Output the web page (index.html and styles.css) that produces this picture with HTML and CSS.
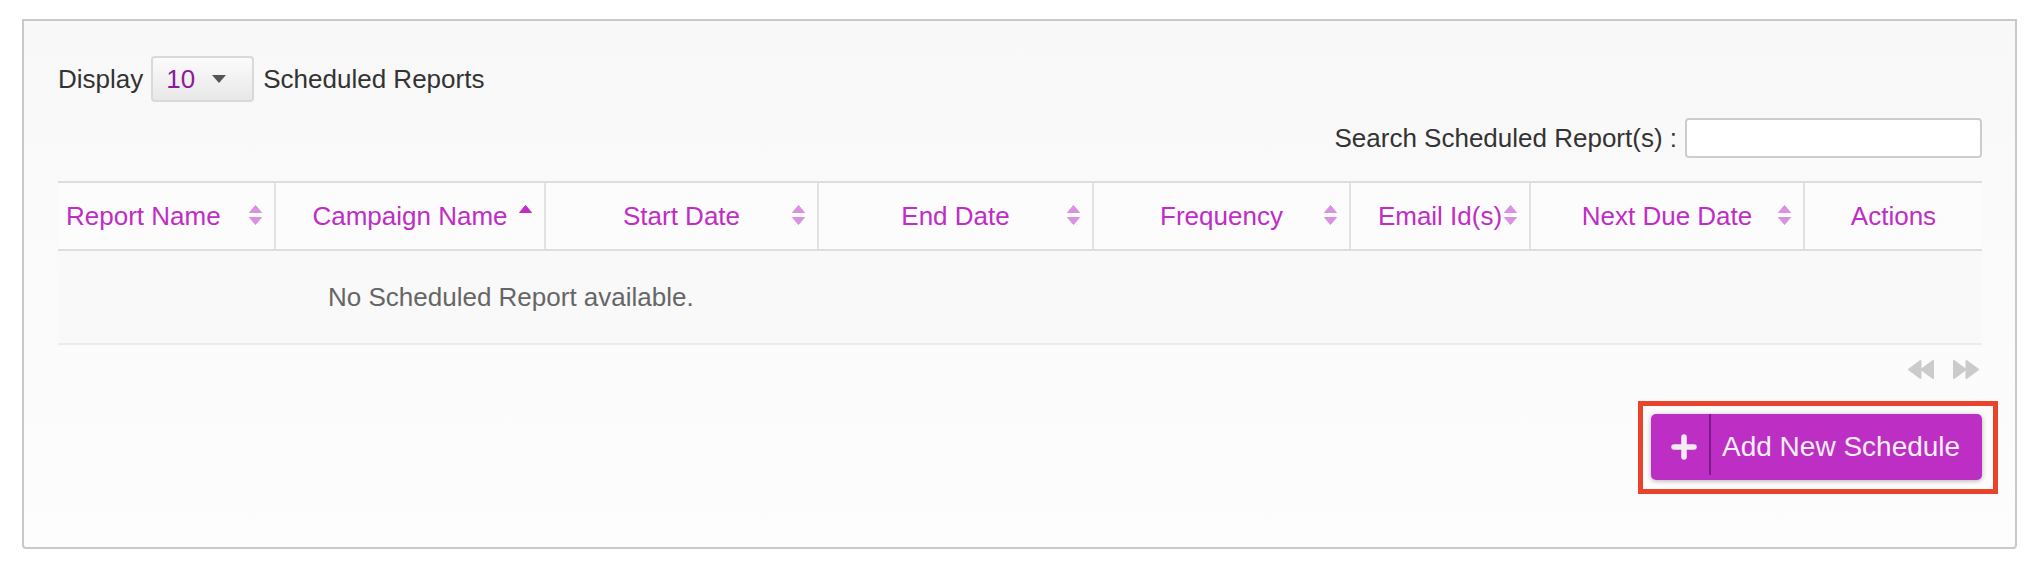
FILE: index.html
```html
<!DOCTYPE html>
<html lang="en">
<head>
<meta charset="utf-8">
<title>Scheduled Reports</title>
<link rel="stylesheet" href="styles.css">
</head>
<body>
<div class="page">
  <div class="panel">
    <div class="length-row">
      <span>Display</span>
      <div class="select">
        <span class="sel-val">10</span>
        <svg class="caret" width="14" height="8" viewBox="0 0 14 8"><path d="M0 0 H14 L7 8 Z" fill="#555"/></svg>
      </div>
      <span>Scheduled Reports</span>
    </div>

    <div class="search-row">
      <label class="search-label" for="q">Search Scheduled Report(s) :</label>
      <input id="q" class="search-input" type="text">
    </div>

    <table class="reports">
      <colgroup>
        <col class="c1"><col class="c2"><col class="c3"><col class="c4">
        <col class="c5"><col class="c6"><col class="c7"><col class="c8">
      </colgroup>
      <thead>
        <tr>
          <th class="first">Report Name<span class="sort"><svg width="13" height="20" viewBox="0 0 13 20"><path d="M6.5 0.5 L12.5 7.5 H0.5 Z" fill="#d992e1" stroke="#d992e1" stroke-linejoin="round"/><path d="M0.5 12.5 H12.5 L6.5 19.5 Z" fill="#d992e1" stroke="#d992e1" stroke-linejoin="round"/></svg></span></th>
          <th>Campaign Name<span class="sort"><svg width="13" height="20" viewBox="0 0 13 20"><path d="M6.5 0.5 L12.5 7.5 H0.5 Z" fill="#bf2dc5" stroke="#bf2dc5" stroke-linejoin="round"/></svg></span></th>
          <th>Start Date<span class="sort"><svg width="13" height="20" viewBox="0 0 13 20"><path d="M6.5 0.5 L12.5 7.5 H0.5 Z" fill="#d992e1" stroke="#d992e1" stroke-linejoin="round"/><path d="M0.5 12.5 H12.5 L6.5 19.5 Z" fill="#d992e1" stroke="#d992e1" stroke-linejoin="round"/></svg></span></th>
          <th>End Date<span class="sort"><svg width="13" height="20" viewBox="0 0 13 20"><path d="M6.5 0.5 L12.5 7.5 H0.5 Z" fill="#d992e1" stroke="#d992e1" stroke-linejoin="round"/><path d="M0.5 12.5 H12.5 L6.5 19.5 Z" fill="#d992e1" stroke="#d992e1" stroke-linejoin="round"/></svg></span></th>
          <th>Frequency<span class="sort"><svg width="13" height="20" viewBox="0 0 13 20"><path d="M6.5 0.5 L12.5 7.5 H0.5 Z" fill="#d992e1" stroke="#d992e1" stroke-linejoin="round"/><path d="M0.5 12.5 H12.5 L6.5 19.5 Z" fill="#d992e1" stroke="#d992e1" stroke-linejoin="round"/></svg></span></th>
          <th>Email Id(s)<span class="sort"><svg width="13" height="20" viewBox="0 0 13 20"><path d="M6.5 0.5 L12.5 7.5 H0.5 Z" fill="#d992e1" stroke="#d992e1" stroke-linejoin="round"/><path d="M0.5 12.5 H12.5 L6.5 19.5 Z" fill="#d992e1" stroke="#d992e1" stroke-linejoin="round"/></svg></span></th>
          <th>Next Due Date<span class="sort"><svg width="13" height="20" viewBox="0 0 13 20"><path d="M6.5 0.5 L12.5 7.5 H0.5 Z" fill="#d992e1" stroke="#d992e1" stroke-linejoin="round"/><path d="M0.5 12.5 H12.5 L6.5 19.5 Z" fill="#d992e1" stroke="#d992e1" stroke-linejoin="round"/></svg></span></th>
          <th>Actions</th>
        </tr>
      </thead>
      <tbody>
        <tr>
          <td class="empty" colspan="8">No Scheduled Report available.</td>
        </tr>
      </tbody>
    </table>

    <div class="pager">
      <span class="pg-btn" title="Previous"><svg width="26" height="19" viewBox="0 0 26 19"><path d="M12.5 1 L1 9.5 L12.5 18 Z" fill="#cbcbcb" stroke="#cbcbcb" stroke-width="2" stroke-linejoin="round"/><path d="M25 1 L13.5 9.5 L25 18 Z" fill="#cbcbcb" stroke="#cbcbcb" stroke-width="2" stroke-linejoin="round"/></svg></span>
      <span class="pg-btn" title="Next"><svg width="26" height="19" viewBox="0 0 26 19"><path d="M1 1 L12.5 9.5 L1 18 Z" fill="#cbcbcb" stroke="#cbcbcb" stroke-width="2" stroke-linejoin="round"/><path d="M13.5 1 L25 9.5 L13.5 18 Z" fill="#cbcbcb" stroke="#cbcbcb" stroke-width="2" stroke-linejoin="round"/></svg></span>
    </div>

    <div class="actions">
      <div class="highlight">
        <button class="add-btn" type="button">
          <span class="btn-icon"><svg width="26" height="26" viewBox="0 0 26 26"><path d="M13 3 V23 M3 13 H23" stroke="#f4ecf5" stroke-width="5.5" stroke-linecap="round"/></svg></span>
          <span class="btn-label">Add New Schedule</span>
        </button>
      </div>
    </div>
  </div>
</div>
</body>
</html>
```
FILE: styles.css
```css
* { box-sizing: border-box; }

html, body {
  margin: 0;
  background: #ffffff;
}

body {
  font-family: "Liberation Sans", Arial, Helvetica, sans-serif;
  font-size: 26px;
  color: #333333;
}

.page {
  padding: 19px 0 0 22px;
}

.panel {
  width: 1995px;
  border: 2px solid #c9c9c9;
  border-radius: 0 0 4px 4px;
  background: linear-gradient(#f8f8f8, #fdfdfd);
  padding: 35px 33px 53px 34px;
}

/* Length selector row */
.length-row {
  display: flex;
  align-items: center;
  gap: 8px;
  height: 46px;
}

.select {
  width: 103px;
  height: 46px;
  display: flex;
  align-items: center;
  justify-content: space-between;
  padding: 0 26px 0 13px;
  border: 2px solid #d9d9d9;
  border-radius: 4px;
  background: linear-gradient(#fbfbfb, #e8e8e8);
  margin-right: 1px;
}

.sel-val {
  color: #8c1b9c;
}

.caret {
  display: block;
}

/* Search row */
.search-row {
  display: flex;
  justify-content: flex-end;
  align-items: center;
  gap: 8px;
  margin-top: 16px;
}

.search-label {
  color: #333333;
}

.search-input {
  width: 297px;
  height: 40px;
  border: 2px solid #cccccc;
  border-radius: 4px;
  background: #ffffff;
  font: inherit;
  padding: 0 8px;
}

/* Table */
.reports {
  width: 1924px;
  margin-top: 23px;
  border-collapse: collapse;
  table-layout: fixed;
}

.c1 { width: 217px; }
.c2 { width: 270px; }
.c3 { width: 273px; }
.c4 { width: 275px; }
.c5 { width: 257px; }
.c6 { width: 180px; }
.c7 { width: 274px; }
.c8 { width: 178px; }

.reports th {
  position: relative;
  height: 68px;
  padding: 0 8px;
  border-top: 2px solid #dddddd;
  border-bottom: 2px solid #dddddd;
  background: #fcfcfc;
  color: #bf2dc5;
  font-weight: normal;
  text-align: center;
  white-space: nowrap;
}

.reports th + th {
  border-left: 2px solid #e2e2e2;
}

.reports th.first {
  text-align: left;
}

.sort {
  position: absolute;
  right: 12px;
  top: 50%;
  width: 13px;
  height: 20px;
  margin-top: -11px;
}

.sort svg {
  display: block;
}

.reports td.empty {
  height: 94px;
  padding: 0 0 0 270px;
  background: #f9f9f9;
  border-bottom: 2px solid #ececec;
  color: #666666;
  text-align: left;
}

/* Pager */
.pager {
  display: flex;
  justify-content: flex-end;
  gap: 19px;
  height: 19px;
  margin-top: 15px;
  padding-right: 3px;
}

.pg-btn svg {
  display: block;
}

/* Add button */
.actions {
  display: flex;
  justify-content: flex-end;
  margin-top: 22px;
}

.highlight {
  border: 5px solid #e9432b;
  padding: 8px 11px 9px 8px;
  margin-right: -16px;
}

.add-btn {
  display: flex;
  align-items: stretch;
  width: 331px;
  height: 66px;
  padding: 0;
  border: none;
  border-radius: 5px;
  background: #bc2ec4;
  color: #f6eef6;
  font-family: "Liberation Sans", Arial, Helvetica, sans-serif;
  font-size: 28px;
  box-shadow: 0 1px 5px rgba(0, 0, 0, 0.3);
  cursor: pointer;
}

.btn-icon {
  width: 60px;
  display: flex;
  align-items: center;
  justify-content: center;
  padding: 0 0 0 8px;
  margin-bottom: 5px;
  border-right: 2px solid #7e1a89;
}

.btn-icon svg {
  display: block;
  margin-top: 5px;
}

.btn-label {
  display: flex;
  align-items: center;
  padding-left: 11px;
}
```
